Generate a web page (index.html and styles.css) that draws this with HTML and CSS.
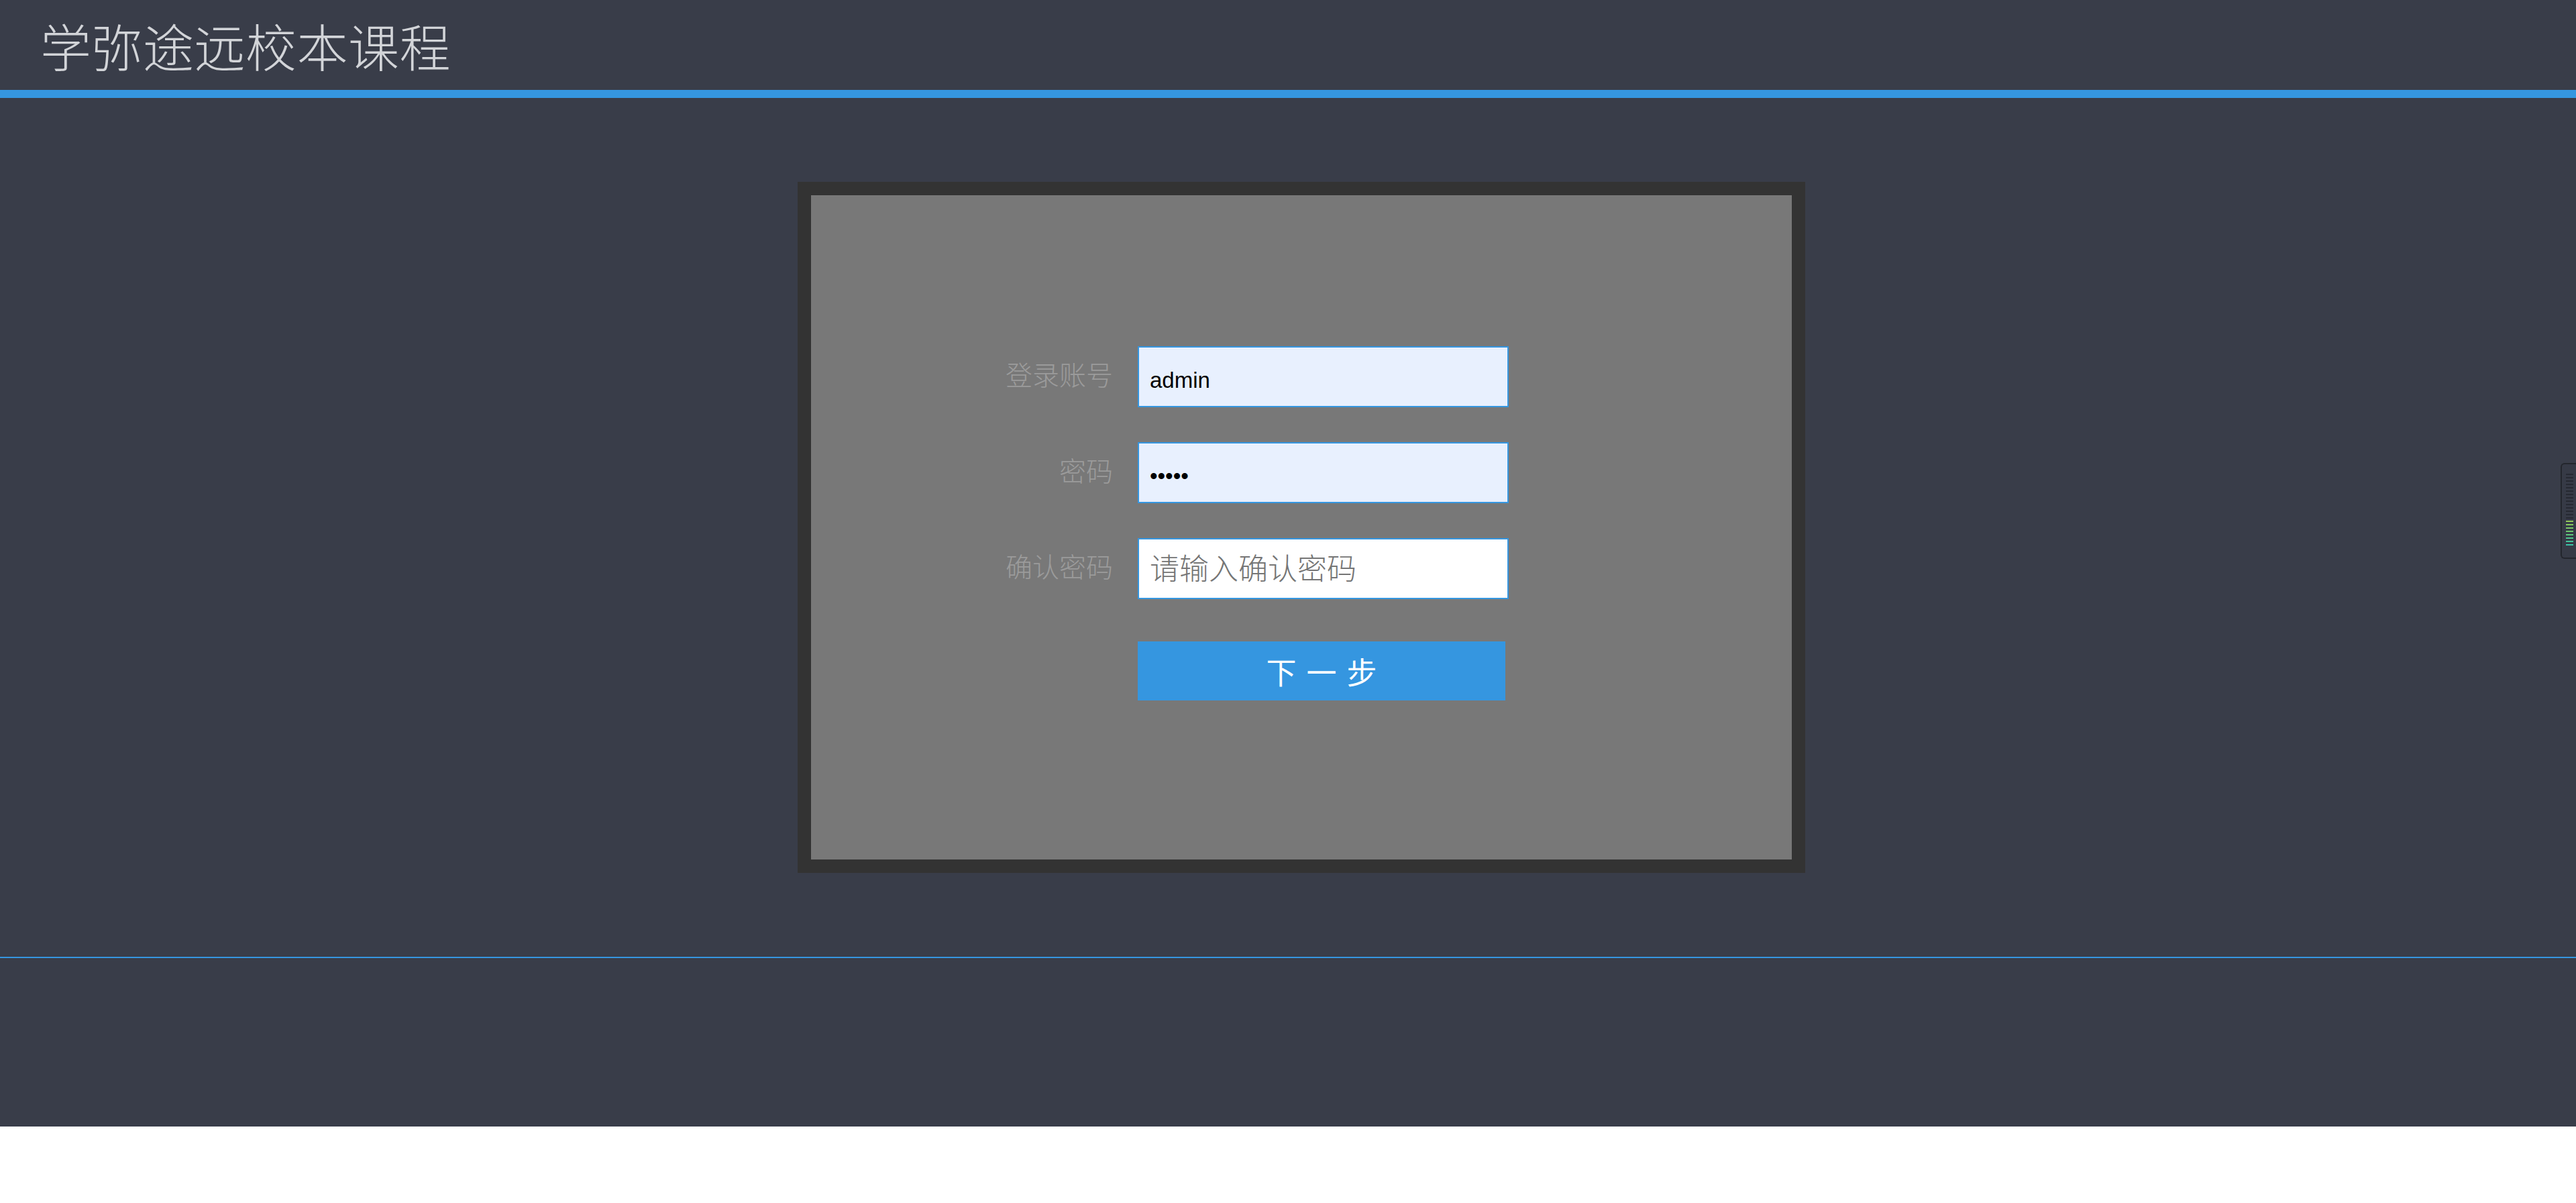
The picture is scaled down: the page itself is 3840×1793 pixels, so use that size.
FILE: index.html
```html
<!DOCTYPE html>
<html lang="zh-CN">
<head>
<meta charset="utf-8">
<title>学弥途远校本课程</title>
<link rel="stylesheet" href="styles.css">
</head>
<body>
<div class="page">
  <header class="header">
    <h1 class="title">学弥途远校本课程</h1>
  </header>
  <div class="topline"></div>
  <main class="main">
    <div class="card">
      <div class="card-inner">
        <form class="form">
          <label class="label" for="acc">登录账号</label>
          <input class="input filled" id="acc" type="text" value="admin">
          <label class="label" for="pwd">密码</label>
          <input class="input filled" id="pwd" type="password" value="admin">
          <label class="label" for="pwd2">确认密码</label>
          <input class="input" id="pwd2" type="password" placeholder="请输入确认密码">
          <span></span>
          <button class="btn" type="button">下 一 步</button>
        </form>
      </div>
    </div>
  </main>
  <footer class="footer"></footer>
</div>
<div class="meter">
  <div class="meter-bars">
    <i></i><i></i><i></i><i></i><i></i><i></i><i></i>
    <i></i><i></i><i></i><i></i><i></i><i></i><i></i>
    <i class="c1"></i><i class="c2"></i><i class="c3"></i><i class="c4"></i>
    <i class="c5"></i><i class="c6"></i><i class="c7"></i><i class="c8"></i>
  </div>
</div>
</body>
</html>
```
FILE: styles.css
```css
html, body {
  margin: 0;
  padding: 0;
  background: #ffffff;
}
body {
  font-family: "Noto Sans CJK SC", "Noto Sans", sans-serif;
}
.page {
  background: #393d49;
  height: 1679px;
  display: flex;
  flex-direction: column;
}
.header {
  height: 134px;
  display: flex;
  align-items: center;
  padding-left: 60px;
  box-sizing: border-box;
}
.title {
  margin: 0;
  font-size: 76px;
  font-weight: 300;
  color: #d2d4d8;
  line-height: 1;
  letter-spacing: 0.5px;
}
.topline {
  height: 12px;
  background: #3596e0;
}
.main {
  padding: 125px 0 125px;
}
.card {
  width: 1462px;
  height: 990px;
  border: 20px solid #333333;
  margin-left: calc(50% - 731px);
}
.card-inner {
  width: 100%;
  height: 100%;
  background: #787878;
  padding-top: 225px;
  box-sizing: border-box;
}
.form {
  display: grid;
  grid-template-columns: 450px 553px;
  column-gap: 37px;
  row-gap: 52px;
  align-items: center;
}
.label {
  text-align: right;
  font-size: 40px;
  font-weight: 300;
  color: #9b9b9b;
  line-height: 1;
  padding-bottom: 10px;
}
.input {
  width: 553px;
  height: 91px;
  box-sizing: border-box;
  border: 2px solid #3596e0;
  background: #ffffff;
  padding: 10px 16px 0;
  margin: 0;
  font-family: "Liberation Sans", Arial, sans-serif;
  font-size: 33px;
  color: #000000;
  outline: none;
}
.input.filled {
  background: #e8f0fe;
}
.input::placeholder {
  font-family: "Noto Sans CJK SC", sans-serif;
  font-size: 44px;
  font-weight: 300;
  color: #757575;
}
.btn {
  width: 548px;
  height: 88px;
  margin-top: 11px;
  border: none;
  background: #3596e0;
  color: #ffffff;
  font-family: "Noto Sans CJK SC", sans-serif;
  font-size: 45px;
  font-weight: 400;
  word-spacing: 5px;
  padding: 0;
}
.footer {
  border-top: 2px solid #3596e0;
  flex: 1;
}
.meter {
  position: absolute;
  right: 0;
  top: 690px;
  width: 21px;
  height: 139px;
  background: #363a46;
  border: 2px solid #23262d;
  border-right: none;
  border-radius: 6px 0 0 6px;
}
.meter-bars {
  position: absolute;
  left: 6px;
  top: 14px;
  display: flex;
  flex-direction: column;
  gap: 3px;
}
.meter-bars i {
  display: block;
  width: 11px;
  height: 2px;
  background: #262932;
}
.meter-bars i.c1 { background: #93c95a; }
.meter-bars i.c2 { background: #86c85f; }
.meter-bars i.c3 { background: #78c866; }
.meter-bars i.c4 { background: #6cc76e; }
.meter-bars i.c5 { background: #5ec77c; }
.meter-bars i.c6 { background: #50c68c; }
.meter-bars i.c7 { background: #44c59a; }
.meter-bars i.c8 { background: #3ac4a6; }
```
